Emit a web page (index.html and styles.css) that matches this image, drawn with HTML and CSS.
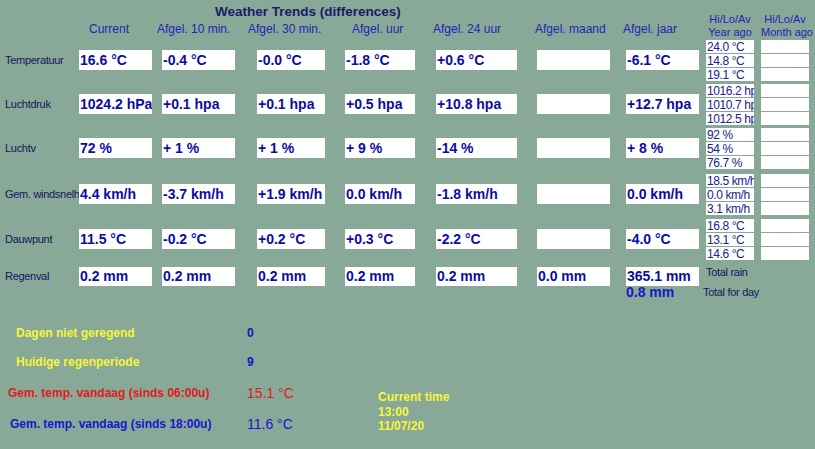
FILE: index.html
```html
<!DOCTYPE html>
<html lang="nl">
<head>
  <meta charset="UTF-8">
  <title>Weather Trends</title>
  <link rel="stylesheet" href="styles.css">
</head>
<body>
  <div class="screen">
    <div class="head">
      <div class="title">Weather Trends (differences)</div>
      <div class="col-head ch-current">Current</div>
      <div class="col-head ch-10">Afgel. 10 min.</div>
      <div class="col-head ch-30">Afgel. 30 min.</div>
      <div class="col-head ch-uur">Afgel. uur</div>
      <div class="col-head ch-24">Afgel. 24 uur</div>
      <div class="col-head ch-maand">Afgel. maand</div>
      <div class="col-head ch-jaar">Afgel. jaar</div>
      <div class="hilo-head year">Hi/Lo/Av<br>Year ago</div>
      <div class="hilo-head month">Hi/Lo/Av<br>Month ago</div>
    </div>

    <div class="row">
      <div class="label">Temperatuur</div>
      <div class="val">16.6 °C</div>
      <div class="val">-0.4 °C</div>
      <div class="val">-0.0 °C</div>
      <div class="val">-1.8 °C</div>
      <div class="val">+0.6 °C</div>
      <div class="val"></div>
      <div class="val">-6.1 °C</div>
      <div class="hilo">
        <div class="hilo-cell">24.0 °C</div>
        <div class="hilo-cell">14.8 °C</div>
        <div class="hilo-cell">19.1 °C</div>
      </div>
      <div class="hilo">
        <div class="hilo-cell"></div>
        <div class="hilo-cell"></div>
        <div class="hilo-cell"></div>
      </div>
    </div>

    <div class="row">
      <div class="label">Luchtdruk</div>
      <div class="val">1024.2 hPa</div>
      <div class="val">+0.1 hpa</div>
      <div class="val">+0.1 hpa</div>
      <div class="val">+0.5 hpa</div>
      <div class="val">+10.8 hpa</div>
      <div class="val"></div>
      <div class="val">+12.7 hpa</div>
      <div class="hilo">
        <div class="hilo-cell">1016.2 hpa</div>
        <div class="hilo-cell">1010.7 hpa</div>
        <div class="hilo-cell">1012.5 hpa</div>
      </div>
      <div class="hilo">
        <div class="hilo-cell"></div>
        <div class="hilo-cell"></div>
        <div class="hilo-cell"></div>
      </div>
    </div>

    <div class="row tall">
      <div class="label">Luchtv</div>
      <div class="val">72 %</div>
      <div class="val">+ 1 %</div>
      <div class="val">+ 1 %</div>
      <div class="val">+ 9 %</div>
      <div class="val">-14 %</div>
      <div class="val"></div>
      <div class="val">+ 8 %</div>
      <div class="hilo">
        <div class="hilo-cell">92 %</div>
        <div class="hilo-cell">54 %</div>
        <div class="hilo-cell">76.7 %</div>
      </div>
      <div class="hilo">
        <div class="hilo-cell"></div>
        <div class="hilo-cell"></div>
        <div class="hilo-cell"></div>
      </div>
    </div>

    <div class="row mid">
      <div class="label">Gem. windsnelheid</div>
      <div class="val">4.4 km/h</div>
      <div class="val">-3.7 km/h</div>
      <div class="val">+1.9 km/h</div>
      <div class="val">0.0 km/h</div>
      <div class="val">-1.8 km/h</div>
      <div class="val"></div>
      <div class="val">0.0 km/h</div>
      <div class="hilo">
        <div class="hilo-cell">18.5 km/h</div>
        <div class="hilo-cell">0.0 km/h</div>
        <div class="hilo-cell">3.1 km/h</div>
      </div>
      <div class="hilo">
        <div class="hilo-cell"></div>
        <div class="hilo-cell"></div>
        <div class="hilo-cell"></div>
      </div>
    </div>

    <div class="row mid">
      <div class="label">Dauwpunt</div>
      <div class="val">11.5 °C</div>
      <div class="val">-0.2 °C</div>
      <div class="val">+0.2 °C</div>
      <div class="val">+0.3 °C</div>
      <div class="val">-2.2 °C</div>
      <div class="val"></div>
      <div class="val">-4.0 °C</div>
      <div class="hilo">
        <div class="hilo-cell">16.8 °C</div>
        <div class="hilo-cell">13.1 °C</div>
        <div class="hilo-cell">14.6 °C</div>
      </div>
      <div class="hilo">
        <div class="hilo-cell"></div>
        <div class="hilo-cell"></div>
        <div class="hilo-cell"></div>
      </div>
    </div>

    <div class="row rain">
      <div class="label">Regenval</div>
      <div class="val">0.2 mm</div>
      <div class="val">0.2 mm</div>
      <div class="val">0.2 mm</div>
      <div class="val">0.2 mm</div>
      <div class="val">0.2 mm</div>
      <div class="val">0.0 mm</div>
      <div class="val">365.1 mm</div>
      <div class="total">Total rain</div>
    </div>

    <div class="row day">
      <div class="day-val">0.8 mm</div>
      <div class="total day-label">Total for day</div>
    </div>

    <div class="summary">
      <div class="notes">
        <div class="note rain-note">Dagen niet geregend</div>
        <div class="note-val count">0</div>
        <div class="note rain-note">Huidige regenperiode</div>
        <div class="note-val count">9</div>
        <div class="note morning">Gem. temp. vandaag (sinds 06:00u)</div>
        <div class="note-val temp morning">15.1 °C</div>
        <div class="note evening">Gem. temp. vandaag (sinds 18:00u)</div>
        <div class="note-val temp evening">11.6 °C</div>
      </div>
      <div class="clock">
        Current time<br>
        13:00<br>
        11/07/20
      </div>
    </div>
  </div>
</body>
</html>
```

FILE: styles.css
```css
body {
  margin: 0;
  background-color: #88a898;
  font-family: "Liberation Sans", Arial, sans-serif;
}

.screen {
  width: 815px;
  height: 449px;
  overflow: hidden;
}

/* header: title + column captions */
.head,
.row {
  display: grid;
  grid-template-columns: 79px 83px 95px 88px 91px 101px 89px 80px 55px 54px;
}

.head {
  height: 40px;
  grid-template-rows: 20px 20px;
}

.title {
  grid-column: 2 / 9;
  grid-row: 1;
  padding: 4px 0 0 136px;
  line-height: 16px;
  font-size: 13.5px;
  font-weight: bold;
  color: #1b1b6b;
  white-space: nowrap;
}

.col-head {
  grid-row: 2;
  line-height: 18px;
  font-size: 12px;
  color: #2323b5;
  white-space: nowrap;
}

.ch-current { grid-column: 2; margin-left: 10px; }
.ch-10 { grid-column: 3; margin-left: -5px; }
.ch-30 { grid-column: 4; margin-left: -9px; }
.ch-uur { grid-column: 5; margin-left: 7px; }
.ch-24 { grid-column: 6; margin-left: -3px; }
.ch-maand { grid-column: 7; margin-left: -2px; }
.ch-jaar { grid-column: 8; margin-left: -3px; }

.hilo-head {
  grid-row: 1 / 3;
  align-self: end;
  width: 48px;
  margin-bottom: 1px;
  line-height: 13px;
  font-size: 11px;
  text-align: center;
  color: #2323b5;
  white-space: nowrap;
}

.hilo-head.year { grid-column: 9; }
.hilo-head.month { grid-column: 10; }

/* data rows */
.row { height: 44px; }
.row.tall { height: 46px; }
.row.mid { height: 45px; }
.row.rain { height: 21px; }
.row.day { height: 15px; }

.label {
  margin-top: 10px;
  padding-left: 5px;
  line-height: 20px;
  font-size: 11px;
  letter-spacing: -0.3px;
  color: #15155e;
  white-space: nowrap;
  overflow: hidden;
}

.val {
  box-sizing: border-box;
  width: 73px;
  height: 20px;
  margin-top: 10px;
  padding-left: 1px;
  background-color: #fff;
  line-height: 20px;
  font-size: 14px;
  font-weight: bold;
  color: #0c0ca2;
  white-space: nowrap;
  overflow: hidden;
}

.row .val:nth-child(4) { width: 68px; }
.row .val:nth-child(5) { width: 70px; }
.row .val:nth-child(6) { width: 81px; }

.rain .label,
.rain .val {
  margin-top: 3px;
  height: 19px;
  line-height: 19px;
}

.hilo {
  display: flex;
  flex-direction: column;
  gap: 1px;
  width: 48px;
  height: 41px;
}

.hilo-cell {
  height: 13px;
  padding-left: 1px;
  background-color: #fff;
  line-height: 14px;
  font-size: 12px;
  letter-spacing: -0.4px;
  color: #20208a;
  white-space: nowrap;
  overflow: hidden;
}

.total {
  grid-column: 9 / 11;
  line-height: 16px;
  font-size: 11px;
  letter-spacing: -0.3px;
  color: #15155e;
  white-space: nowrap;
}

.day-val {
  grid-column: 8;
  line-height: 15px;
  font-size: 14px;
  font-weight: bold;
  color: #1818c8;
}

.day-label {
  grid-column: 9 / 11;
  margin-left: -3px;
  line-height: 15px;
}

/* bottom summary */
.summary {
  display: flex;
}

.notes {
  display: grid;
  grid-template-columns: 247px 131px;
  grid-template-rows: 29px 30px 31px 31px;
  align-items: center;
  padding-top: 18px;
}

.note {
  font-size: 12px;
  font-weight: bold;
  white-space: nowrap;
}

.note.rain-note {
  padding-left: 16px;
  color: #f6f63a;
}

.note.morning {
  padding-left: 8px;
}

.note.evening {
  padding-left: 10px;
}

.morning { color: #e01a1a; }
.evening { color: #1616cc; }

.note-val.count {
  font-size: 12px;
  font-weight: bold;
  color: #1414c4;
}

.note-val.temp {
  font-size: 14px;
}

.clock {
  margin-top: 90px;
  line-height: 14.5px;
  font-size: 12px;
  font-weight: bold;
  color: #f6f63a;
}
```
